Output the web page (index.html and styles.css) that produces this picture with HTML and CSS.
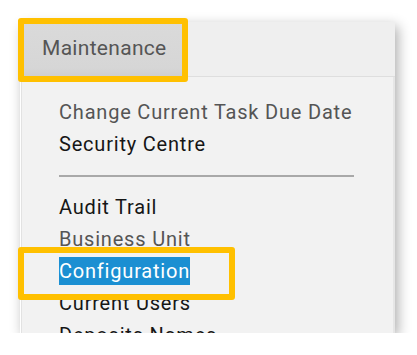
FILE: index.html
```html
<!DOCTYPE html>
<html>
<head>
<meta charset="utf-8">
<link rel="stylesheet" href="styles.css">
</head>
<body>
<div class="shot">
  <div class="menubar">
    <div class="tab">Maintenance</div>
  </div>
  <div class="dropdown">
    <ul class="group">
      <li class="item muted">Change Current Task Due Date</li>
      <li class="item">Security Centre</li>
    </ul>
    <div class="sep"></div>
    <ul class="group">
      <li class="item">Audit Trail</li>
      <li class="item muted">Business Unit</li>
      <li class="item"><span class="selected">Configuration</span></li>
      <li class="item">Current Users</li>
      <li class="item">Deposits Names</li>
    </ul>
  </div>
  <div class="callout callout-tab"></div>
  <div class="callout callout-item"></div>
</div>
</body>
</html>
```
FILE: styles.css
```css
html, body {
  margin: 0;
  padding: 0;
  background: #ffffff;
}
body {
  font-family: Roboto, "Liberation Sans", sans-serif;
}
.shot {
  position: relative;
  margin: 22px 0 0 20px;
  width: 375px;
  height: 311px;
  display: flex;
  flex-direction: column;
  box-shadow: 3px 4px 12px rgba(0, 0, 0, 0.32);
}
.menubar {
  height: 54px;
  background: #efefef;
  border-bottom: 1px solid #dedede;
  display: flex;
}
.tab {
  width: 166px;
  box-sizing: border-box;
  padding-left: 22px;
  background: linear-gradient(#dadada, #d6d6d6 85%, #cfcfcf);
  color: #555555;
  font-size: 21px;
  letter-spacing: 0.3px;
  line-height: 52px;
  height: 54px;
}
.dropdown {
  flex: 1;
  overflow: hidden;
  margin-left: 1px;
  background: #f2f2f2;
  border-left: 1px solid #e2e2e2;
  border-right: 2px solid #e6e6e6;
  padding: 19px 0 0 37px;
}
.group {
  list-style: none;
  margin: 0;
  padding: 0;
}
.item {
  font-size: 20px;
  letter-spacing: 0.8px;
  line-height: 32px;
  height: 32px;
  color: #161616;
  white-space: nowrap;
}
.item.muted {
  color: #555555;
}
.sep {
  width: 295px;
  height: 2px;
  background: #a9a9a9;
  margin: 15px 0 14px;
}
.selected {
  background: #1b8fd2;
  color: #ffffff;
  padding: 2px 0;
}
.callout {
  position: absolute;
  box-sizing: border-box;
  border: 6px solid #ffc000;
  border-radius: 3px;
}
.callout-tab {
  left: -2px;
  top: -4px;
  width: 170px;
  height: 64px;
}
.callout-item {
  left: -2px;
  top: 225px;
  width: 217px;
  height: 53px;
}
```
